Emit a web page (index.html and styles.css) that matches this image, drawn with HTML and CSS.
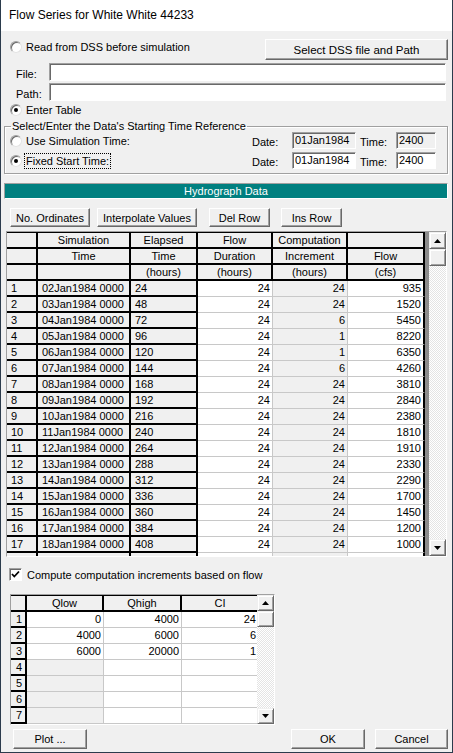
FILE: index.html
```html
<!DOCTYPE html>
<html lang="en">
<head>
    <meta charset="UTF-8">
    <title>Flow Series for White White 44233</title>
    <link rel="stylesheet" href="styles.css">
</head>
<body>
<div class="window">
    <div class="title-bar">Flow Series for White White 44233</div>
    <div class="dialog">
        <div class="dss-row">
            <label class="option"><span class="radio"></span>Read from DSS before simulation</label>
            <button class="btn btn-dss">Select DSS file and Path</button>
        </div>
        <div class="field-row first">
            <span class="field-label">File:</span>
            <input class="text-box path-box" type="text">
        </div>
        <div class="field-row">
            <span class="field-label">Path:</span>
            <input class="text-box path-box" type="text">
        </div>
        <label class="option enter-table"><span class="radio checked"></span>Enter Table</label>

        <fieldset class="group">
            <legend>Select/Enter the Data's Starting Time Reference</legend>
            <div class="time-row">
                <label class="option time-option"><span class="radio"></span>Use Simulation Time:</label>
                <span class="time-label">Date:</span>
                <input class="text-box date-box disabled" type="text" value="01Jan1984" readonly>
                <span class="time-label hour-label">Time:</span>
                <input class="text-box hour-box disabled" type="text" value="2400" readonly>
            </div>
            <div class="time-row">
                <label class="option time-option"><span class="radio checked"></span><span class="focused">Fixed Start Time:</span></label>
                <span class="time-label">Date:</span>
                <input class="text-box date-box" type="text" value="01Jan1984">
                <span class="time-label hour-label">Time:</span>
                <input class="text-box hour-box" type="text" value="2400">
            </div>
        </fieldset>

        <div class="caption-frame"><div class="caption">Hydrograph Data</div></div>

        <div class="tool-row">
            <button class="btn btn-ordinates">No. Ordinates</button>
            <button class="btn btn-interpolate">Interpolate Values</button>
            <button class="btn btn-del">Del Row</button>
            <button class="btn btn-ins">Ins Row</button>
        </div>

        <div class="grid main-grid">
            <div class="grid-body">
                <div class="row"><div class="cell head"></div><div class="cell head">Simulation</div><div class="cell head">Elapsed</div><div class="cell head">Flow</div><div class="cell head">Computation</div><div class="cell head"></div></div>
                <div class="row"><div class="cell head"></div><div class="cell head">Time</div><div class="cell head">Time</div><div class="cell head">Duration</div><div class="cell head">Increment</div><div class="cell head">Flow</div></div>
                <div class="row"><div class="cell head"></div><div class="cell head"></div><div class="cell head">(hours)</div><div class="cell head">(hours)</div><div class="cell head">(hours)</div><div class="cell head">(cfs)</div></div>
                <div class="row"><div class="cell fixed">1</div><div class="cell fixed">02Jan1984 0000</div><div class="cell fixed">24</div><div class="cell num">24</div><div class="cell num shaded">24</div><div class="cell num last">935</div></div>
                <div class="row"><div class="cell fixed">2</div><div class="cell fixed">03Jan1984 0000</div><div class="cell fixed">48</div><div class="cell num">24</div><div class="cell num shaded">24</div><div class="cell num last">1520</div></div>
                <div class="row"><div class="cell fixed">3</div><div class="cell fixed">04Jan1984 0000</div><div class="cell fixed">72</div><div class="cell num">24</div><div class="cell num shaded">6</div><div class="cell num last">5450</div></div>
                <div class="row"><div class="cell fixed">4</div><div class="cell fixed">05Jan1984 0000</div><div class="cell fixed">96</div><div class="cell num">24</div><div class="cell num shaded">1</div><div class="cell num last">8220</div></div>
                <div class="row"><div class="cell fixed">5</div><div class="cell fixed">06Jan1984 0000</div><div class="cell fixed">120</div><div class="cell num">24</div><div class="cell num shaded">1</div><div class="cell num last">6350</div></div>
                <div class="row"><div class="cell fixed">6</div><div class="cell fixed">07Jan1984 0000</div><div class="cell fixed">144</div><div class="cell num">24</div><div class="cell num shaded">6</div><div class="cell num last">4260</div></div>
                <div class="row"><div class="cell fixed">7</div><div class="cell fixed">08Jan1984 0000</div><div class="cell fixed">168</div><div class="cell num">24</div><div class="cell num shaded">24</div><div class="cell num last">3810</div></div>
                <div class="row"><div class="cell fixed">8</div><div class="cell fixed">09Jan1984 0000</div><div class="cell fixed">192</div><div class="cell num">24</div><div class="cell num shaded">24</div><div class="cell num last">2840</div></div>
                <div class="row"><div class="cell fixed">9</div><div class="cell fixed">10Jan1984 0000</div><div class="cell fixed">216</div><div class="cell num">24</div><div class="cell num shaded">24</div><div class="cell num last">2380</div></div>
                <div class="row"><div class="cell fixed">10</div><div class="cell fixed">11Jan1984 0000</div><div class="cell fixed">240</div><div class="cell num">24</div><div class="cell num shaded">24</div><div class="cell num last">1810</div></div>
                <div class="row"><div class="cell fixed">11</div><div class="cell fixed">12Jan1984 0000</div><div class="cell fixed">264</div><div class="cell num">24</div><div class="cell num shaded">24</div><div class="cell num last">1910</div></div>
                <div class="row"><div class="cell fixed">12</div><div class="cell fixed">13Jan1984 0000</div><div class="cell fixed">288</div><div class="cell num">24</div><div class="cell num shaded">24</div><div class="cell num last">2330</div></div>
                <div class="row"><div class="cell fixed">13</div><div class="cell fixed">14Jan1984 0000</div><div class="cell fixed">312</div><div class="cell num">24</div><div class="cell num shaded">24</div><div class="cell num last">2290</div></div>
                <div class="row"><div class="cell fixed">14</div><div class="cell fixed">15Jan1984 0000</div><div class="cell fixed">336</div><div class="cell num">24</div><div class="cell num shaded">24</div><div class="cell num last">1700</div></div>
                <div class="row"><div class="cell fixed">15</div><div class="cell fixed">16Jan1984 0000</div><div class="cell fixed">360</div><div class="cell num">24</div><div class="cell num shaded">24</div><div class="cell num last">1450</div></div>
                <div class="row"><div class="cell fixed">16</div><div class="cell fixed">17Jan1984 0000</div><div class="cell fixed">384</div><div class="cell num">24</div><div class="cell num shaded">24</div><div class="cell num last">1200</div></div>
                <div class="row"><div class="cell fixed">17</div><div class="cell fixed">18Jan1984 0000</div><div class="cell fixed">408</div><div class="cell num">24</div><div class="cell num shaded">24</div><div class="cell num last">1000</div></div>
                <div class="row"><div class="cell fixed"></div><div class="cell fixed"></div><div class="cell fixed"></div><div class="cell num"></div><div class="cell num shaded"></div><div class="cell num last"></div></div>
            </div>
            <div class="grid-band"></div>
            <div class="scrollbar">
                <div class="sb-btn"><svg width="7" height="4" viewBox="0 0 7 4"><polygon points="0,4 7,4 3.5,0" fill="#000"/></svg></div>
                <div class="sb-btn"></div>
                <div class="sb-track"></div>
                <div class="sb-btn"><svg width="7" height="4" viewBox="0 0 7 4"><polygon points="0,0 7,0 3.5,4" fill="#000"/></svg></div>
            </div>
        </div>

        <label class="check-row">
            <span class="checkbox"><svg width="11" height="11" viewBox="0 0 11 11"><polyline points="2,5 4.3,7.5 9,2.5" fill="none" stroke="#000" stroke-width="1.8"/></svg></span>
            Compute computation increments based on flow
        </label>

        <div class="grid small-grid">
            <div class="grid-body">
                <div class="row"><div class="cell head"></div><div class="cell head">Qlow</div><div class="cell head">Qhigh</div><div class="cell head end">CI</div></div>
                <div class="row"><div class="cell fixed">1</div><div class="cell num">0</div><div class="cell num">4000</div><div class="cell num end">24</div></div>
                <div class="row"><div class="cell fixed">2</div><div class="cell num">4000</div><div class="cell num">6000</div><div class="cell num end">6</div></div>
                <div class="row"><div class="cell fixed">3</div><div class="cell num">6000</div><div class="cell num">20000</div><div class="cell num end">1</div></div>
                <div class="row"><div class="cell fixed">4</div><div class="cell num shaded"></div><div class="cell num"></div><div class="cell num end"></div></div>
                <div class="row"><div class="cell fixed">5</div><div class="cell num shaded"></div><div class="cell num"></div><div class="cell num end"></div></div>
                <div class="row"><div class="cell fixed">6</div><div class="cell num shaded"></div><div class="cell num"></div><div class="cell num end"></div></div>
                <div class="row"><div class="cell fixed">7</div><div class="cell num shaded"></div><div class="cell num"></div><div class="cell num end"></div></div>
            </div>
            <div class="scrollbar">
                <div class="sb-btn"><svg width="7" height="4" viewBox="0 0 7 4"><polygon points="0,4 7,4 3.5,0" fill="#000"/></svg></div>
                <div class="sb-btn"></div>
                <div class="sb-track"></div>
                <div class="sb-btn"><svg width="7" height="4" viewBox="0 0 7 4"><polygon points="0,0 7,0 3.5,4" fill="#000"/></svg></div>
            </div>
        </div>

        <div class="bottom-row">
            <button class="btn btn-plot">Plot ...</button>
            <div class="ok-cancel">
                <button class="btn btn-ok">OK</button>
                <button class="btn btn-cancel">Cancel</button>
            </div>
        </div>
    </div>
</div>
</body>
</html>
```

FILE: styles.css
```css
body {
    margin: 0;
    font-family: 'Liberation Sans', Arial, sans-serif;
    font-size: 11px;
    color: #000;
    background: #f0f0f0;
}
.window {
    width: 453px;
    height: 753px;
    box-sizing: border-box;
    border: 1px solid #2b3b4c;
    border-top: none;
    display: flex;
    flex-direction: column;
    overflow: hidden;
}
.title-bar {
    height: 31px;
    line-height: 30px;
    padding-left: 8px;
    background: #fff;
    font-size: 12px;
    flex: none;
}
.dialog {
    flex: 1;
    background: #f0f0f0;
}

/* common controls */
.btn {
    box-sizing: border-box;
    height: 19px;
    padding: 0;
    font-family: inherit;
    font-size: 11px;
    color: #000;
    background: #f0f0f0;
    border: 1px solid;
    border-color: #fff #696969 #696969 #fff;
    box-shadow: inset -1px -1px 0 #a0a0a0;
}
.text-box {
    box-sizing: border-box;
    height: 18px;
    margin: 0;
    padding: 0 2px;
    font-family: inherit;
    font-size: 11px;
    color: #000;
    background: #fff;
    border: 1px solid;
    border-color: #a0a0a0 #fff #fff #a0a0a0;
    box-shadow: inset 1px 1px 0 #696969;
    outline: none;
}
.text-box.disabled {
    background: #f0f0f0;
}
.option {
    display: flex;
    align-items: center;
    height: 14px;
    line-height: 14px;
}
.radio {
    position: relative;
    box-sizing: border-box;
    width: 12px;
    height: 12px;
    margin-right: 4px;
    flex: none;
    border-radius: 50%;
    background: #fff;
    border: 1px solid;
    border-color: #a0a0a0 #e3e3e3 #e3e3e3 #a0a0a0;
    box-shadow: inset 1px 1px 0 #696969;
}
.radio.checked::after {
    content: '';
    position: absolute;
    left: 3px;
    top: 3px;
    width: 4px;
    height: 4px;
    border-radius: 50%;
    background: #000;
}

/* dss source */
.dss-row {
    display: flex;
    justify-content: space-between;
    margin-top: 8px;
    padding-left: 9px;
    height: 21px;
}
.dss-row .option {
    margin-top: 1px;
}
.btn-dss {
    width: 183px;
    height: 21px;
    margin-right: 4px;
    font-size: 11.5px;
}
.field-row {
    display: flex;
    height: 18px;
    margin-top: 2px;
    padding-left: 15px;
}
.field-row.first {
    margin-top: 3px;
}
.field-label {
    width: 33px;
    padding-top: 4px;
    line-height: 14px;
}
.path-box {
    width: 397px;
}
.enter-table {
    margin-top: 2px;
    padding-left: 9px;
}

/* start time group */
.group {
    margin: 5px 4px 0 3px;
    padding: 0 0 3px 5px;
    border: 1px solid #a0a0a0;
    box-shadow: 1px 1px 0 #fff, inset 1px 1px 0 #fff;
    min-width: 0;
}
.group legend {
    margin-left: 1px;
    padding: 0 1px;
    line-height: 8px;
    height: 8px;
}
.time-row {
    display: flex;
    align-items: center;
    height: 20px;
}
.time-option {
    width: 242px;
    padding-top: 2px;
}
.focused {
    outline: 1px dotted #000;
    outline-offset: 0;
    padding: 0 1px;
    margin-left: -1px;
}
.time-label {
    width: 40px;
    padding-top: 3px;
}
.hour-label {
    width: 36px;
    margin-left: 4px;
}
.date-box {
    width: 64px;
    height: 17px;
}
.hour-box {
    width: 40px;
    height: 17px;
}

/* hydrograph table */
.caption-frame {
    margin: 9px 4px 0 3px;
    border: 1px solid;
    border-color: #a0a0a0 #fff #fff #a0a0a0;
}
.caption {
    height: 14px;
    line-height: 14px;
    background: #008080;
    color: #fff;
    text-align: center;
}
.tool-row {
    display: flex;
    margin-top: 9px;
    padding-left: 9px;
}
.btn-ordinates { width: 80px; }
.btn-interpolate { width: 100px; margin-left: 7px; }
.btn-del { width: 61px; margin-left: 12px; }
.btn-ins { width: 61px; margin-left: 11px; }

.grid {
    display: flex;
    border: 1px solid;
    border-color: #a0a0a0 #fff #fff #a0a0a0;
    background: #f0f0f0;
}
.grid-body {
    overflow: hidden;
    border-top: 1px solid #000;
}
.main-grid {
    width: 439px;
    margin: 4px 0 0 5px;
}
.main-grid .grid-body {
    width: 418px;
    height: 323px;
}
.grid-band {
    width: 4px;
    background: #8c8c8c;
}
.scrollbar {
    width: 17px;
    display: flex;
    flex-direction: column;
}
.sb-btn {
    box-sizing: border-box;
    height: 17px;
    display: flex;
    align-items: center;
    justify-content: center;
    background: #f0f0f0;
    border: 1px solid;
    border-color: #f0f0f0 #696969 #696969 #f0f0f0;
    box-shadow: inset 1px 1px 0 #fff, inset -1px -1px 0 #a0a0a0;
}
.sb-track {
    flex: 1;
    background-image: repeating-conic-gradient(#e4e4e4 0 25%, #fff 0 50%);
    background-size: 2px 2px;
}
.row {
    display: grid;
    height: 16px;
}
.main-grid .row {
    grid-template-columns: 31px 93px 67px 75px 75px 77px;
}
.cell {
    box-sizing: border-box;
    line-height: 14px;
    white-space: nowrap;
    overflow: hidden;
}
.head {
    background: #f0f0f0;
    border-right: 2px solid #000;
    border-bottom: 2px solid #000;
    text-align: center;
}
.fixed {
    padding-left: 4px;
    background: #f0f0f0;
    border-right: 2px solid #000;
    border-bottom: 2px solid #000;
}
.num {
    padding-right: 2px;
    background: #fff;
    border-right: 1px solid #c8c8c8;
    border-bottom: 1px solid #c8c8c8;
    text-align: right;
}
.num.shaded {
    background: #f0f0f0;
}
.num.last {
    border-right: 2px solid #000;
}

/* increments */
.check-row {
    display: flex;
    align-items: center;
    height: 13px;
    margin-top: 11px;
    padding-left: 8px;
}
.checkbox {
    box-sizing: border-box;
    width: 13px;
    height: 13px;
    margin-right: 5px;
    display: flex;
    align-items: center;
    justify-content: center;
    background: #fff;
    border: 1px solid;
    border-color: #a0a0a0 #fff #fff #a0a0a0;
    box-shadow: inset 1px 1px 0 #696969;
}
.small-grid {
    width: 263px;
    margin: 13px 0 0 9px;
}
.small-grid .grid-body {
    width: 247px;
    height: 128px;
}
.small-grid .row {
    grid-template-columns: 16px 77px 78px 76px;
}
.small-grid .fixed {
    padding-left: 5px;
}
.small-grid .end {
    border-right: none;
}
.small-grid .sb-btn {
    height: 16px;
}

/* dialog buttons */
.bottom-row {
    display: flex;
    justify-content: space-between;
    margin-top: 4px;
    padding: 0 4px 0 12px;
}
.bottom-row .btn {
    height: 20px;
}
.btn-plot { width: 74px; }
.btn-ok { width: 74px; }
.btn-cancel { width: 73px; margin-left: 7px; }
```
